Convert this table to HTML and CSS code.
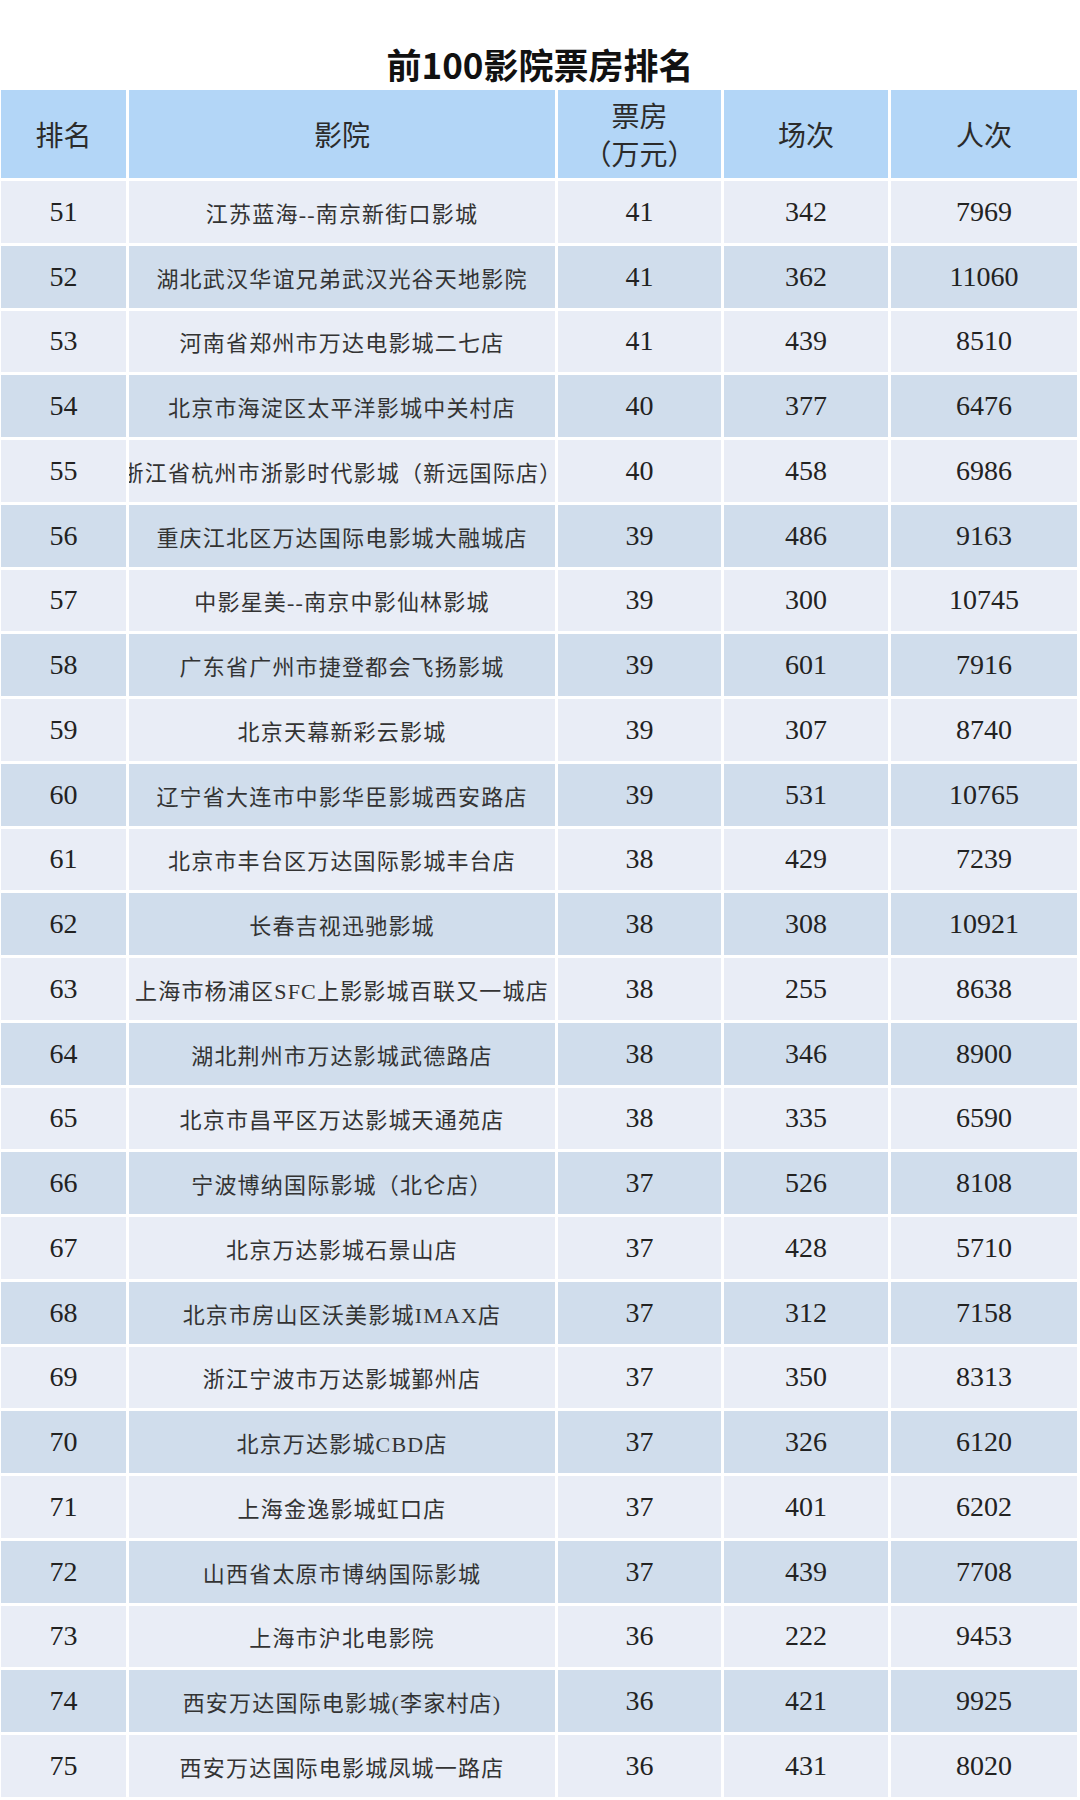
FILE: index.html
```html
<!DOCTYPE html>
<html lang="zh-CN">
<head>
<meta charset="utf-8">
<title>前100影院票房排名</title>
<link rel="stylesheet" href="styles.css">
</head>
<body>
<h1 class="title">前100影院票房排名</h1>
<div class="table">
  <div class="row head">
    <div class="cell">排名</div>
    <div class="cell">影院</div>
    <div class="cell two"><span>票房</span><span>（万元）</span></div>
    <div class="cell">场次</div>
    <div class="cell">人次</div>
  </div>
  <div class="row odd"><div class="cell num">51</div><div class="cell name">江苏蓝海--南京新街口影城</div><div class="cell num">41</div><div class="cell num">342</div><div class="cell num">7969</div></div>
  <div class="row even"><div class="cell num">52</div><div class="cell name">湖北武汉华谊兄弟武汉光谷天地影院</div><div class="cell num">41</div><div class="cell num">362</div><div class="cell num">11060</div></div>
  <div class="row odd"><div class="cell num">53</div><div class="cell name">河南省郑州市万达电影城二七店</div><div class="cell num">41</div><div class="cell num">439</div><div class="cell num">8510</div></div>
  <div class="row even"><div class="cell num">54</div><div class="cell name">北京市海淀区太平洋影城中关村店</div><div class="cell num">40</div><div class="cell num">377</div><div class="cell num">6476</div></div>
  <div class="row odd"><div class="cell num">55</div><div class="cell name">浙江省杭州市浙影时代影城（新远国际店）</div><div class="cell num">40</div><div class="cell num">458</div><div class="cell num">6986</div></div>
  <div class="row even"><div class="cell num">56</div><div class="cell name">重庆江北区万达国际电影城大融城店</div><div class="cell num">39</div><div class="cell num">486</div><div class="cell num">9163</div></div>
  <div class="row odd"><div class="cell num">57</div><div class="cell name">中影星美--南京中影仙林影城</div><div class="cell num">39</div><div class="cell num">300</div><div class="cell num">10745</div></div>
  <div class="row even"><div class="cell num">58</div><div class="cell name">广东省广州市捷登都会飞扬影城</div><div class="cell num">39</div><div class="cell num">601</div><div class="cell num">7916</div></div>
  <div class="row odd"><div class="cell num">59</div><div class="cell name">北京天幕新彩云影城</div><div class="cell num">39</div><div class="cell num">307</div><div class="cell num">8740</div></div>
  <div class="row even"><div class="cell num">60</div><div class="cell name">辽宁省大连市中影华臣影城西安路店</div><div class="cell num">39</div><div class="cell num">531</div><div class="cell num">10765</div></div>
  <div class="row odd"><div class="cell num">61</div><div class="cell name">北京市丰台区万达国际影城丰台店</div><div class="cell num">38</div><div class="cell num">429</div><div class="cell num">7239</div></div>
  <div class="row even"><div class="cell num">62</div><div class="cell name">长春吉视迅驰影城</div><div class="cell num">38</div><div class="cell num">308</div><div class="cell num">10921</div></div>
  <div class="row odd"><div class="cell num">63</div><div class="cell name">上海市杨浦区SFC上影影城百联又一城店</div><div class="cell num">38</div><div class="cell num">255</div><div class="cell num">8638</div></div>
  <div class="row even"><div class="cell num">64</div><div class="cell name">湖北荆州市万达影城武德路店</div><div class="cell num">38</div><div class="cell num">346</div><div class="cell num">8900</div></div>
  <div class="row odd"><div class="cell num">65</div><div class="cell name">北京市昌平区万达影城天通苑店</div><div class="cell num">38</div><div class="cell num">335</div><div class="cell num">6590</div></div>
  <div class="row even"><div class="cell num">66</div><div class="cell name">宁波博纳国际影城（北仑店）</div><div class="cell num">37</div><div class="cell num">526</div><div class="cell num">8108</div></div>
  <div class="row odd"><div class="cell num">67</div><div class="cell name">北京万达影城石景山店</div><div class="cell num">37</div><div class="cell num">428</div><div class="cell num">5710</div></div>
  <div class="row even"><div class="cell num">68</div><div class="cell name">北京市房山区沃美影城IMAX店</div><div class="cell num">37</div><div class="cell num">312</div><div class="cell num">7158</div></div>
  <div class="row odd"><div class="cell num">69</div><div class="cell name">浙江宁波市万达影城鄞州店</div><div class="cell num">37</div><div class="cell num">350</div><div class="cell num">8313</div></div>
  <div class="row even"><div class="cell num">70</div><div class="cell name">北京万达影城CBD店</div><div class="cell num">37</div><div class="cell num">326</div><div class="cell num">6120</div></div>
  <div class="row odd"><div class="cell num">71</div><div class="cell name">上海金逸影城虹口店</div><div class="cell num">37</div><div class="cell num">401</div><div class="cell num">6202</div></div>
  <div class="row even"><div class="cell num">72</div><div class="cell name">山西省太原市博纳国际影城</div><div class="cell num">37</div><div class="cell num">439</div><div class="cell num">7708</div></div>
  <div class="row odd"><div class="cell num">73</div><div class="cell name">上海市沪北电影院</div><div class="cell num">36</div><div class="cell num">222</div><div class="cell num">9453</div></div>
  <div class="row even"><div class="cell num">74</div><div class="cell name">西安万达国际电影城(李家村店)</div><div class="cell num">36</div><div class="cell num">421</div><div class="cell num">9925</div></div>
  <div class="row odd"><div class="cell num">75</div><div class="cell name">西安万达国际电影城凤城一路店</div><div class="cell num">36</div><div class="cell num">431</div><div class="cell num">8020</div></div>
</div>
</body>
</html>
```
FILE: styles.css
```css
html, body {
  margin: 0;
  padding: 0;
  background: #ffffff;
}
body {
  width: 1080px;
  height: 1800px;
  overflow: hidden;
  font-family: "Liberation Serif", "Noto Sans CJK SC", serif;
  color: #222222;
}
.title {
  margin: 0 0 4px 0;
  padding-top: 44px;
  height: 42px;
  line-height: 40px;
  font-family: "Noto Sans CJK SC", "Noto Sans", sans-serif;
  font-weight: 700;
  font-size: 35px;
  text-align: center;
  color: #111111;
}
.table {
  display: flex;
  flex-direction: column;
  gap: 3px;
  margin-left: 1px;
}
.row {
  display: grid;
  grid-template-columns: 125px 426px 163px 164px 186px;
  column-gap: 3px;
  height: 61.75px;
}
.row.head {
  height: 88px;
}
.cell {
  display: flex;
  align-items: center;
  justify-content: center;
  overflow: hidden;
  white-space: nowrap;
}
.head .cell {
  background: #b3d6f7;
  font-size: 28px;
  color: #2b2b2b;
  font-family: "Noto Sans CJK SC", sans-serif;
  font-weight: 400;
}
.head .cell.two {
  flex-direction: column;
  line-height: 38px;
}
.odd .cell {
  background: #e9edf6;
}
.even .cell {
  background: #d0ddec;
}
.num {
  font-size: 28px;
}
.name {
  font-size: 22px;
  letter-spacing: 1.2px;
  color: #333333;
}
```
